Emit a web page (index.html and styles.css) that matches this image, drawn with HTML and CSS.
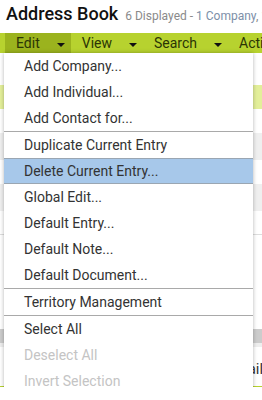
FILE: index.html
```html
<!DOCTYPE html>
<html lang="en">

<head>
  <meta charset="UTF-8">
  <meta name="viewport" content="width=device-width, initial-scale=1.0">
  <title>Address Book</title>

  <link rel="stylesheet" href="styles.css">
</head>

<body>
  <header class="page-header">
    <h1>Address Book</h1>
    <span class="count">6 Displayed - <span class="count-link">1 Company</span>, 1 Individual</span>
  </header>

  <nav class="menubar">
    <div class="menu active">Edit <span class="caret"></span></div>
    <div class="menu">View <span class="caret"></span></div>
    <div class="menu">Search <span class="caret"></span></div>
    <div class="menu">Actions <span class="caret"></span></div>
  </nav>

  <main class="content">
    <div class="row toolbar"></div>
    <div class="row row-selected"></div>
    <div class="row"></div>
    <div class="row row-alt"></div>
    <div class="row"></div>
    <div class="row row-alt"></div>
    <div class="row row-last"></div>
    <div class="spacer"></div>
    <div class="scrollbar"></div>
    <div class="scroll-shade"></div>
    <div class="grid-head"><span>Email</span></div>
  </main>

  <ul class="dropdown">
    <li>Add Company...</li>
    <li>Add Individual...</li>
    <li>Add Contact for...</li>
    <li class="sep"></li>
    <li>Duplicate Current Entry</li>
    <li class="hover">Delete Current Entry...</li>
    <li>Global Edit...</li>
    <li>Default Entry...</li>
    <li>Default Note...</li>
    <li>Default Document...</li>
    <li class="sep"></li>
    <li>Territory Management</li>
    <li class="sep"></li>
    <li>Select All</li>
    <li class="disabled">Deselect All</li>
    <li class="disabled">Invert Selection</li>
    <li class="sep"></li>
  </ul>
</body>

</html>
```

FILE: styles.css
```css
body {
  font-family: Roboto, "Liberation Sans", sans-serif;
  margin: 0;
  background-color: #ffffff;
  color: #333333;
  overflow: hidden;
  position: relative;
}

.page-header {
  display: flex;
  align-items: baseline;
  height: 33px;
  padding: 0 0 0 6px;
  white-space: nowrap;
  overflow: hidden;
}

.page-header h1 {
  font-size: 18px;
  font-weight: 500;
  color: #111111;
  margin: 0;
  line-height: 26px;
  padding-top: 1px;
}

.count {
  font-size: 12px;
  color: #8a8a8a;
  margin-left: 7px;
}

.count-link {
  color: #7d8fa8;
}

.menubar {
  display: flex;
  height: 20px;
  background-color: #b7d22f;
  padding-left: 5px;
  white-space: nowrap;
  overflow: hidden;
}

.menu {
  display: flex;
  align-items: center;
  padding: 0 6px 0 11px;
  font-size: 14px;
  color: #2b3505;
}

.menu.active {
  background-color: #9bb31e;
}

.caret {
  display: inline-block;
  margin: 4px 0 0 17px;
  border-left: 4px solid transparent;
  border-right: 4px solid transparent;
  border-top: 4px solid #111111;
}

.content .row {
  height: 24px;
}

.content .toolbar {
  height: 32px;
}

.content .row-selected {
  background-color: #e3ef99;
}

.content .row-alt {
  height: 27px;
  background-color: #efefef;
}

.content .row-last {
  height: 23px;
  border-bottom: 1px solid #dddddd;
}

.spacer {
  height: 94px;
}

.scrollbar {
  height: 14px;
  background-color: #cccccc;
}

.scroll-shade {
  height: 4px;
  background-color: #eeeeee;
}

.grid-head {
  height: 39px;
  border-bottom: 1px solid #b7d22f;
  padding-left: 226px;
  font-size: 15px;
  line-height: 44px;
  white-space: nowrap;
  overflow: hidden;
  color: #333333;
}

.dropdown {
  position: absolute;
  top: 53px;
  left: 4px;
  width: 249px;
  margin: 0;
  padding: 0;
  list-style: none;
  background-color: #ffffff;
  box-shadow: 0 0 4px rgba(0, 0, 0, 0.3);
}

.dropdown li {
  height: 26px;
  line-height: 26px;
  padding-left: 20px;
  font-size: 14px;
  color: #333333;
  white-space: nowrap;
}

.dropdown li.sep {
  height: 1px;
  padding: 0;
  background-color: #a9a9a9;
}

.dropdown li.hover {
  background-color: #a7c8ea;
  box-shadow: inset 0 1px #9aa6b2, inset 0 -1px #9aa6b2;
}

.dropdown li.disabled {
  color: #c4c4c4;
}
```
